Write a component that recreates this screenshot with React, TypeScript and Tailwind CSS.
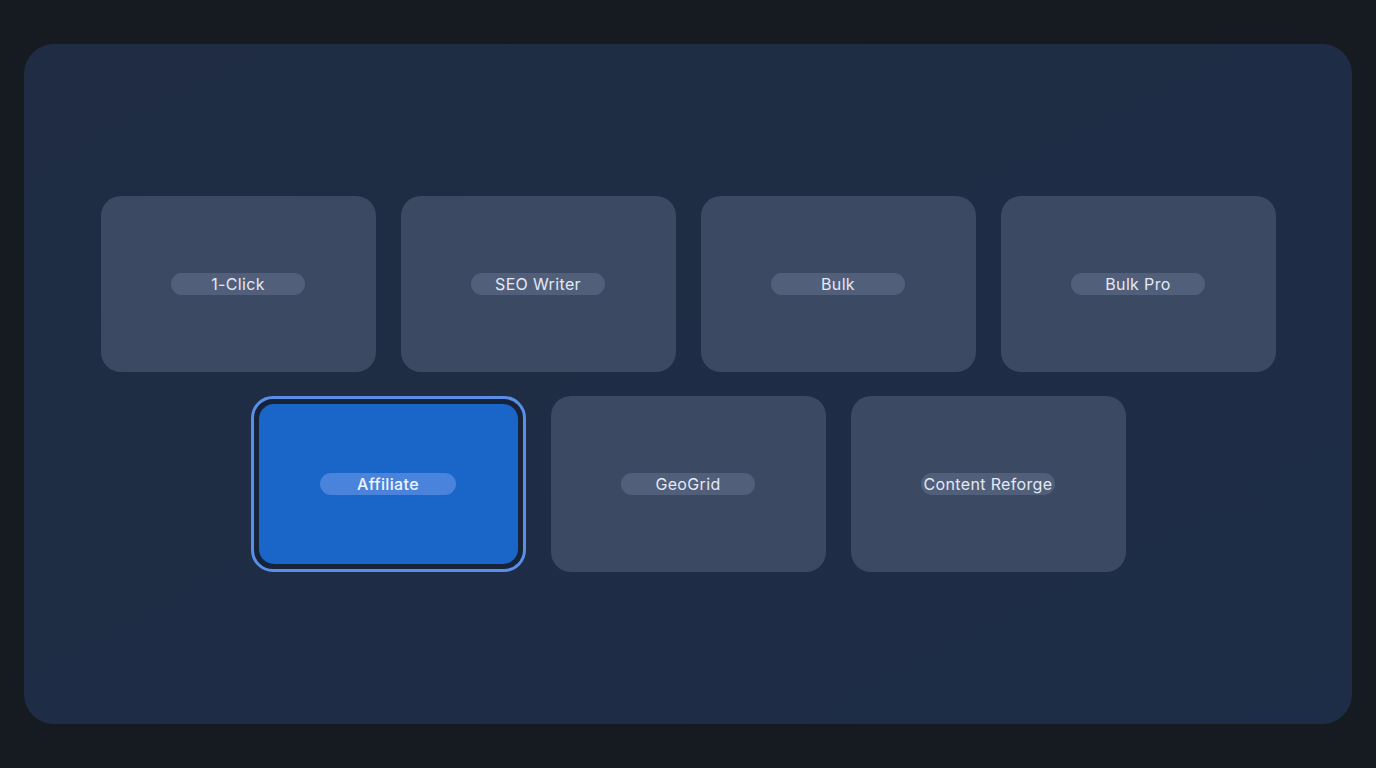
import React from "react";

const font = { fontFamily: "Inter, 'Noto Sans', sans-serif" };

function Pill({ label, active }: { label: string; active?: boolean }) {
  return (
    <span
      className={
        "inline-flex h-[22px] items-center justify-center rounded-full px-[3px] text-[16px] leading-none tracking-[0.35px] " +
        (active
          ? "min-w-[136px] bg-[#4a83dc] font-medium text-[#eef4ff]"
          : "min-w-[134px] bg-[#525f7b] font-normal text-[#e3e9f3]")
      }
    >
      {label}
    </span>
  );
}

function Card({ label }: { label: string }) {
  return (
    <div className="flex h-[176px] w-[275px] items-center justify-center rounded-[20px] bg-[#3b4963]">
      <Pill label={label} />
    </div>
  );
}

function ActiveCard({ label }: { label: string }) {
  return (
    <div className="h-[176px] w-[275px] rounded-[22px] border-[3px] border-[#5a8fe9] bg-[#172338] p-[5px]">
      <div className="flex h-full w-full items-center justify-center rounded-[15px] bg-[#1966c8]">
        <Pill label={label} active />
      </div>
    </div>
  );
}

export default function App() {
  return (
    <div className="flex h-[768px] w-[1376px] items-center justify-center bg-[#161a21]" style={font}>
      <div className="flex h-[680px] w-[1328px] flex-col items-center justify-center gap-[24px] rounded-[30px] bg-gradient-to-br from-[#1f2c43] to-[#1e2d47]">
        <div className="flex gap-[25px]">
          <Card label="1-Click" />
          <Card label="SEO Writer" />
          <Card label="Bulk" />
          <Card label="Bulk Pro" />
        </div>
        <div className="flex gap-[25px]">
          <ActiveCard label="Affiliate" />
          <Card label="GeoGrid" />
          <Card label="Content Reforge" />
        </div>
      </div>
    </div>
  );
}
